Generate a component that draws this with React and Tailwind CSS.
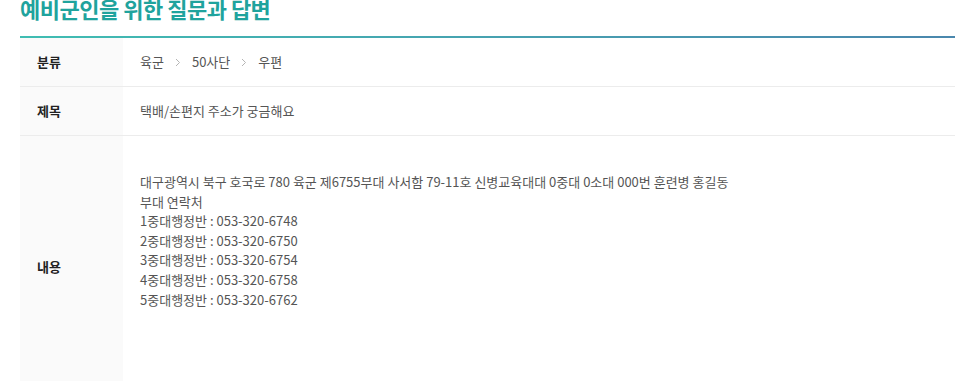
import React from "react";

const Chevron = () => (
  <svg width="6" height="9" viewBox="0 0 6 9" className="mx-[11px] inline-block" fill="none">
    <path d="M1 1 L4.5 4.5 L1 8" stroke="#b5b5b5" strokeWidth="1" />
  </svg>
);

export default function App() {
  const font = { fontFamily: '"Noto Sans CJK KR", "Noto Sans", sans-serif' };
  return (
    <div className="w-[966px] h-[381px] overflow-hidden bg-white" style={font}>
      <div className="ml-[20px] w-[935px]">
        <h2 className="-mt-[7px] h-[43px] text-[22px] leading-[30px] font-bold text-[#1fa39d] tracking-[-0.5px]">
          예비군인을 위한 질문과 답변
        </h2>
        <div className="h-[2px] bg-gradient-to-r from-[#3fbdb2] to-[#4a87ad]" />
        <div className="flex border-b border-[#ececec]">
          <div className="w-[103px] shrink-0 bg-[#fafafa] pl-[17px] h-[48px] flex items-center text-[13px] font-bold text-[#222]">분류</div>
          <div className="flex items-center pl-[17px] text-[13px] text-[#555]">
            <span>육군</span>
            <Chevron />
            <span>50사단</span>
            <Chevron />
            <span>우편</span>
          </div>
        </div>
        <div className="flex border-b border-[#ececec]">
          <div className="w-[103px] shrink-0 bg-[#fafafa] pl-[17px] h-[48px] flex items-center text-[13px] font-bold text-[#222]">제목</div>
          <div className="flex items-center pl-[17px] text-[13px] text-[#555]">택배/손편지 주소가 궁금해요</div>
        </div>
        <div className="flex">
          <div className="w-[103px] shrink-0 bg-[#fafafa] pl-[17px] flex items-center text-[13px] font-bold text-[#222]">내용</div>
          <div className="pl-[17px] pt-[36px] pb-[88px] text-[13px] leading-[19.6px] text-[#555]">
            <p>대구광역시 북구 호국로 780 육군 제6755부대 사서함 79-11호 신병교육대대 0중대 0소대 000번 훈련병 홍길동</p>
            <p>부대 연락처</p>
            <p>1중대행정반 : 053-320-6748</p>
            <p>2중대행정반 : 053-320-6750</p>
            <p>3중대행정반 : 053-320-6754</p>
            <p>4중대행정반 : 053-320-6758</p>
            <p>5중대행정반 : 053-320-6762</p>
          </div>
        </div>
      </div>
    </div>
  );
}
